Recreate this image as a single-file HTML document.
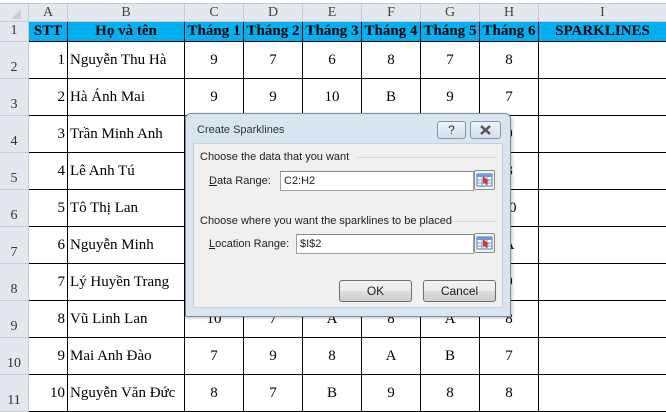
<!DOCTYPE html>
<html><head><meta charset="utf-8"><style>
*{margin:0;padding:0;box-sizing:border-box}
body{width:666px;height:411px;overflow:hidden;background:#fff;position:relative;font-family:"Liberation Serif",serif}
.a{position:absolute}
.hd{background:#e4e8ee;color:#444;font-size:14px;text-align:center;border-right:1px solid #c5ccd6;border-bottom:1px solid #c5ccd6}
.c{position:absolute;border-right:1px solid #000;border-bottom:1px solid #000;font-size:15px;display:flex;align-items:center;justify-content:center;white-space:nowrap}
.rh{position:absolute;left:0;width:29px;background:#e4e8ee;border-right:1px solid #c5ccd6;border-bottom:1px solid #c5ccd6;font-size:14px;color:#333;text-align:center;display:flex;align-items:flex-end;justify-content:center;padding-bottom:2px}
.t{font-weight:bold;background:#00b0f0;font-size:15px}
.dl{font-family:"Liberation Sans",sans-serif;font-size:11px;color:#1e1e1e;white-space:nowrap}
.ib{position:absolute;background:#fff;border:1px solid #a0a0a0;border-top-color:#8a8a8a}
.btn{position:absolute;border:1px solid #707070;border-radius:3px;background:linear-gradient(#f2f2f2,#ebebeb 50%,#dddddd 51%,#cfcfcf);text-align:center;line-height:20px;font-size:12px}
.icn{position:absolute;width:21px;height:20px;border:1px solid #8a8a8a;border-radius:2px;background:#f4f4f4}
</style></head><body>
<div class="a" style="left:0;top:0;width:666px;height:4px;background:#fff;border-bottom:1px solid #c5ccd6"></div>
<div class="a hd" style="left:0;top:4px;width:29px;height:18px"><svg width="29" height="18"><polygon points="21,5 21,15 11,15" fill="#c9ced6"/></svg></div>
<div id="g"></div>
<script>
var cols=[29,68,185,244,303,362,421,480,539,667];
var L="ABCDEFGHI";
var h='';
for(var i=0;i<9;i++){h+='<div class="a hd" style="left:'+cols[i]+'px;top:4px;width:'+(cols[i+1]-cols[i])+'px;height:18px;line-height:17px">'+L[i]+'</div>';}
var rows=[22,42];for(var r=0;r<10;r++)rows.push(42+37*(r+1));
for(var r=0;r<11;r++){h+='<div class="rh" style="top:'+rows[r]+'px;height:'+(rows[r+1]-rows[r])+'px">'+(r+1)+'</div>';}
var hdr=["STT","Họ và tên","Tháng 1","Tháng 2","Tháng 3","Tháng 4","Tháng 5","Tháng 6","SPARKLINES"];
var data=[
["1","Nguyễn Thu Hà","9","7","6","8","7","8"],
["2","Hà Ánh Mai","9","9","10","B","9","7"],
["3","Trần Minh Anh","","","","","","9"],
["4","Lê Anh Tú","","","","","","8"],
["5","Tô Thị Lan","","","","","","10"],
["6","Nguyễn Minh","","","","","","A"],
["7","Lý Huyền Trang","","","","","","9"],
["8","Vũ Linh Lan","10","7","A","8","A","8"],
["9","Mai Anh Đào","7","9","8","A","B","7"],
["10","Nguyễn Văn Đức","8","7","B","9","8","8"]];
for(var i=0;i<9;i++){h+='<div class="c t" style="left:'+cols[i]+'px;top:22px;width:'+(cols[i+1]-cols[i])+'px;height:20px">'+hdr[i]+'</div>';}
for(var r=0;r<10;r++){for(var i=0;i<9;i++){var v=i<8?data[r][i]:'';var st='';
if(i==0)st='justify-content:flex-end;padding-right:2px;';if(i==1)st='justify-content:flex-start;padding-left:2px;';
h+='<div class="c" style="'+st+'left:'+cols[i]+'px;top:'+rows[r+1]+'px;width:'+(cols[i+1]-cols[i])+'px;height:37px">'+v+'</div>';}}
document.getElementById('g').innerHTML=h;
</script>
<div class="a" style="left:185px;top:113px;width:326px;height:204px;background:#d9e4f1;border:1px solid #7f8c9b;border-radius:6px 6px 0 0;box-shadow:1px 1px 3px rgba(0,0,0,.25)"></div>
<div class="a dl" style="left:197px;top:124px;color:#333">Create Sparklines</div>
<div class="a" style="left:437px;top:121px;width:29px;height:18px;border:1px solid #8596aa;border-radius:3px;background:linear-gradient(#eef3f9,#d3deeb);font-family:'Liberation Sans',sans-serif;font-size:12px;text-align:center;line-height:16px;color:#333">?</div>
<div class="a" style="left:470px;top:121px;width:31px;height:18px;border:1px solid #8596aa;border-radius:3px;background:linear-gradient(#eef3f9,#d3deeb);text-align:center"><svg width="29" height="16"><path d="M10 4 L19 12 M19 4 L10 12" stroke="#555" stroke-width="2.5"/></svg></div>
<div class="a" style="left:193px;top:143px;width:310px;height:165px;background:#f0f0f0;border:1px solid #c8d2de"></div>
<div class="a dl" style="left:200px;top:151px">Choose the data that you want</div>
<div class="a" style="left:357px;top:157px;width:140px;height:1px;background:#d8d8d8"></div>
<div class="a dl" style="left:209px;top:175px"><u>D</u>ata Range:</div>
<div class="ib" style="left:280px;top:171px;width:194px;height:20px"></div>
<div class="a dl" style="left:284px;top:175px">C2:H2</div>
<div class="a dl" style="left:200px;top:215px">Choose where you want the sparklines to be placed</div>
<div class="a" style="left:452px;top:221px;width:45px;height:1px;background:#d8d8d8"></div>
<div class="a dl" style="left:209px;top:238px"><u>L</u>ocation Range:</div>
<div class="ib" style="left:296px;top:234px;width:178px;height:20px"></div>
<div class="a dl" style="left:300px;top:238px">$I$2</div>
<div class="icn" style="left:474px;top:170px"><svg width="19" height="18"><rect x="2" y="3" width="15" height="12" fill="#fff" stroke="#4a78b5"/><rect x="2" y="3" width="15" height="3" fill="#6d9bd6"/><path d="M2 9H17M2 12H17M7 3V15M12 3V15" stroke="#6d9bd6"/><path d="M8 5 L14 10 L12 11 L13 13 L11 14 L10 12 L8 13Z" fill="#d9342b"/></svg></div>
<div class="icn" style="left:474px;top:233px"><svg width="19" height="18"><rect x="2" y="3" width="15" height="12" fill="#fff" stroke="#4a78b5"/><rect x="2" y="3" width="15" height="3" fill="#6d9bd6"/><path d="M2 9H17M2 12H17M7 3V15M12 3V15" stroke="#6d9bd6"/><path d="M8 5 L14 10 L12 11 L13 13 L11 14 L10 12 L8 13Z" fill="#d9342b"/></svg></div>
<div class="btn dl" style="left:339px;top:280px;width:73px;height:22px;font-size:12px">OK</div>
<div class="btn dl" style="left:423px;top:280px;width:73px;height:22px;font-size:12px">Cancel</div>
</body></html>
